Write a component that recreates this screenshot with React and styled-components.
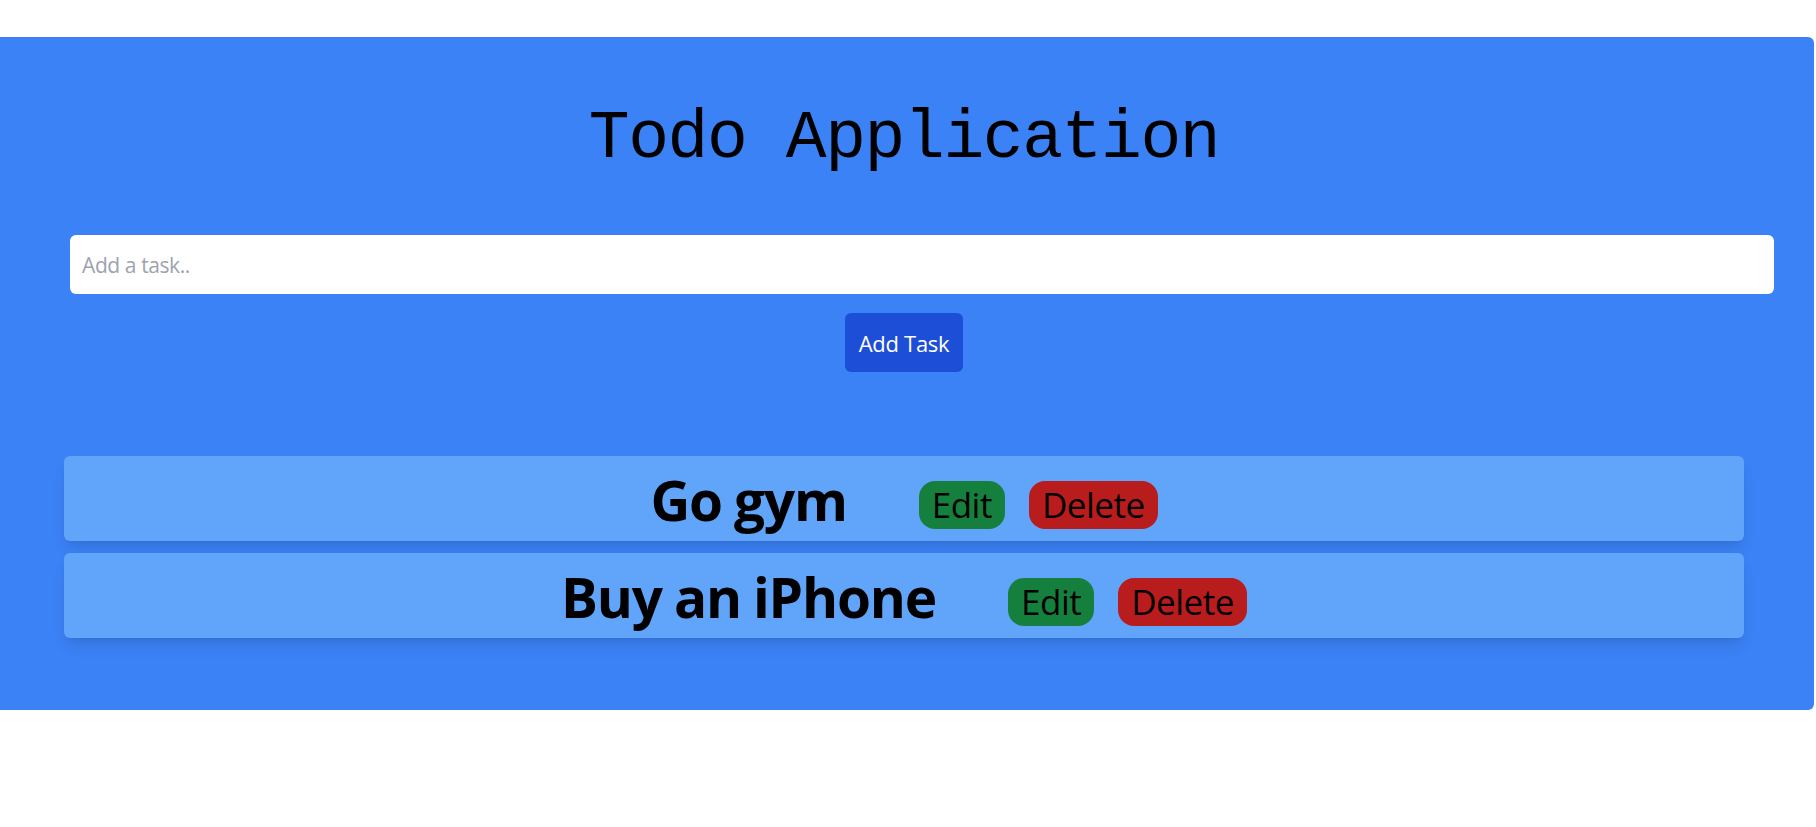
import React, { useState } from "react";
import styled, { createGlobalStyle } from "styled-components";

const GlobalStyle = createGlobalStyle`
    html, body {
        margin: 0;
        padding: 0;
        background: #ffffff;
        font-family: "Open Sans", "Noto Sans", sans-serif;
    }
`;

export default function App() {

    const [ task, setTask ] = useState("");
    const [ todos, setTodos ] = useState([
        { id: 1, text: "Go gym" },
        { id: 2, text: "Buy an iPhone" },
    ]);

    const addTask = (event) => {
        event.preventDefault();
        if(task.trim().length > 0) {
            setTodos([ ...todos, { id: Date.now(), text: task } ]);
            setTask("");
        }
    }

    const deleteTask = (id) => {
        setTodos(todos.filter((todo) => todo.id !== id));
    }

    return (
        <Page>
            <GlobalStyle />
            <Panel>
                <Title>Todo Application</Title>
                <Form onSubmit={(event) => addTask(event)}>
                    <TaskInput
                        type="text"
                        placeholder="Add a task.."
                        value={task}
                        onChange={(event) => setTask(event.target.value)}
                    />
                    <AddButton type="submit">Add Task</AddButton>
                </Form>
                <List>
                    {
                        todos.map((todo) => (
                            <Card key={todo.id}>
                                <TaskText>{todo.text}</TaskText>
                                <Actions>
                                    <Pill $color="#15803d">Edit</Pill>
                                    <Pill $color="#b91c1c" onClick={() => deleteTask(todo.id)}>Delete</Pill>
                                </Actions>
                            </Card>
                        ))
                    }
                </List>
            </Panel>
        </Page>
    )
}

const Page = styled.div`
    padding-top: 37px;
    min-height: 827px;
    box-sizing: border-box;
`;

const Panel = styled.div`
    width: 1814px;
    background-color: #3b82f6;
    border-radius: 0 6px 6px 0;
    padding: 68px 6px 72px 0;
    box-sizing: border-box;
`;

const Title = styled.h1`
    margin: 0;
    text-align: center;
    font-family: "Liberation Mono", "DejaVu Sans Mono", monospace;
    font-weight: 400;
    font-size: 68px;
    line-height: 68px;
    letter-spacing: -1.4px;
    color: #000;
`;

const Form = styled.form`
    display: flex;
    flex-direction: column;
    align-items: center;
    gap: 19px;
    margin-top: 62px;
`;

const TaskInput = styled.input`
    align-self: flex-start;
    margin-left: 70px;
    width: 1704px;
    height: 59px;
    box-sizing: border-box;
    padding: 0 12px;
    border: 0;
    border-radius: 6px;
    outline: none;
    font-family: "Open Sans", sans-serif;
    font-size: 21px;
    letter-spacing: -0.4px;
    color: #111;
    background: #fff;
    &::placeholder {
        color: #9ca3af;
    }
`;

const AddButton = styled.button`
    width: 118px;
    height: 59px;
    padding: 0;
    border: 0;
    border-radius: 6px;
    background-color: #1d4ed8;
    color: #fff;
    font-family: "Open Sans", sans-serif;
    font-size: 22px;
    letter-spacing: -0.3px;
    cursor: pointer;
`;

const List = styled.div`
    display: flex;
    flex-direction: column;
    gap: 12px;
    margin: 84px 64px 0;
`;

const Card = styled.div`
    height: 85px;
    display: flex;
    justify-content: center;
    align-items: flex-start;
    background-color: #60a5fa;
    border-radius: 6px;
    box-shadow: 0 10px 15px -3px rgba(0, 0, 0, 0.1), 0 4px 6px -4px rgba(0, 0, 0, 0.1);
`;

const TaskText = styled.span`
    margin-top: 6px;
    font-weight: 700;
    font-size: 55px;
    line-height: 75px;
    letter-spacing: -1.2px;
    word-spacing: -1px;
    color: #000;
`;

const Actions = styled.div`
    display: flex;
    gap: 24px;
    margin: 25px 0 0 72px;
`;

const Pill = styled.button`
    height: 48px;
    padding: 0 13px;
    border: 0;
    border-radius: 16px;
    background-color: ${(props) => props.$color};
    color: #000;
    font-family: "Open Sans", sans-serif;
    font-size: 35px;
    line-height: 48px;
    letter-spacing: -0.5px;
    cursor: pointer;
`;
